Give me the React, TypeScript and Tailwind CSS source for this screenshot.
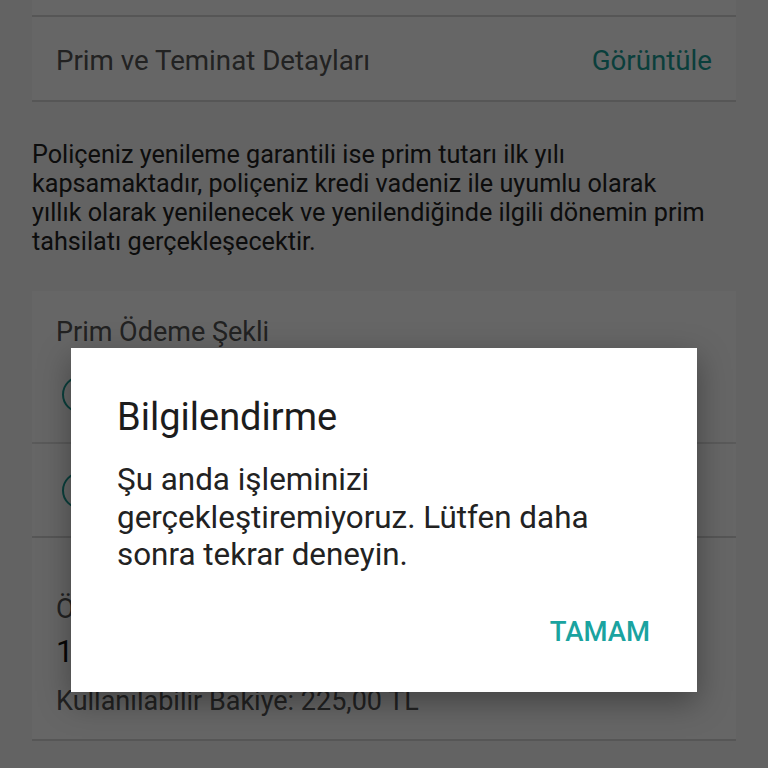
export default function App() {
  return (
    <div className="relative h-[768px] w-full overflow-hidden bg-[#f7f7f7] font-['Roboto',sans-serif]">
      <div className="mx-8 h-[15px] bg-white" />

      {/* Prim ve teminat */}
      <div className="mx-8 flex h-[87px] items-center justify-between border-y-2 border-[#d6d6d6] bg-white px-6 pt-1">
        <span className="text-[27.7px] text-[#555]">Prim ve Teminat Detayları</span>
        <span className="text-[27.7px] text-[#1a9e96]">Görüntüle</span>
      </div>

      <p className="mx-8 mt-[38px] text-[25.2px] leading-[29px] text-[#222]">
        Poliçeniz yenileme garantili ise prim tutarı ilk yılı
        <br />
        kapsamaktadır, poliçeniz kredi vadeniz ile uyumlu olarak
        <br />
        yıllık olarak yenilenecek ve yenilendiğinde ilgili dönemin prim
        <br />
        tahsilatı gerçekleşecektir.
      </p>

      {/* Prim ödeme şekli (options sit under the dialog) */}
      <div className="mx-8 mt-[35px] border-b-2 border-[#d6d6d6] bg-white">
        <div className="px-6 pt-[26px] text-[27px] leading-[30px] text-[#555]">Prim Ödeme Şekli</div>
        <div className="flex h-[97px] items-center border-b-2 border-[#e2e2e2] pl-[30px]">
          <span className="h-[37px] w-[37px] rounded-full border-2 border-[#1a9e96]" />
        </div>
        <div className="flex h-[92px] items-center pl-[30px]">
          <span className="h-[37px] w-[37px] rounded-full border-2 border-[#1a9e96]" />
        </div>
      </div>

      {/* Ödenecek tutar */}
      <div className="mx-8 flex h-[203px] flex-col border-b-2 border-[#d6d6d6] bg-white px-6 pt-[56px]">
        <span className="text-[27px] leading-[30px] text-[#555]">Ödenecek Tutar</span>
        <span className="mt-[11px] text-[31px] leading-[34px] text-[#111]">175,00 TL</span>
        <span className="mt-[17px] text-[27px] leading-[30px] text-[#555]">Kullanılabilir Bakiye: 225,00 TL</span>
      </div>

      {/* dim overlay */}
      <div className="absolute inset-0 bg-black/60" />

      {/* dialog */}
      <div className="absolute left-[71px] top-[348px] flex h-[344px] w-[626px] flex-col bg-white pl-[46px] pr-[47px] pt-[48px] shadow-[0_10px_30px_rgba(0,0,0,0.35)]">
        <div className="text-[38px] leading-[42px] text-[#1c1c1c]">Bilgilendirme</div>
        <div className="mt-[23px] text-[31.4px] leading-[37.5px] text-[#222]">
          Şu anda işleminizi
          <br />
          gerçekleştiremiyoruz. Lütfen daha
          <br />
          sonra tekrar deneyin.
        </div>
        <div className="mb-[45px] mt-auto flex justify-end">
          <span className="text-[27.5px] font-medium leading-[30px] text-[#1aa3a0]">TAMAM</span>
        </div>
      </div>
    </div>
  )
}
